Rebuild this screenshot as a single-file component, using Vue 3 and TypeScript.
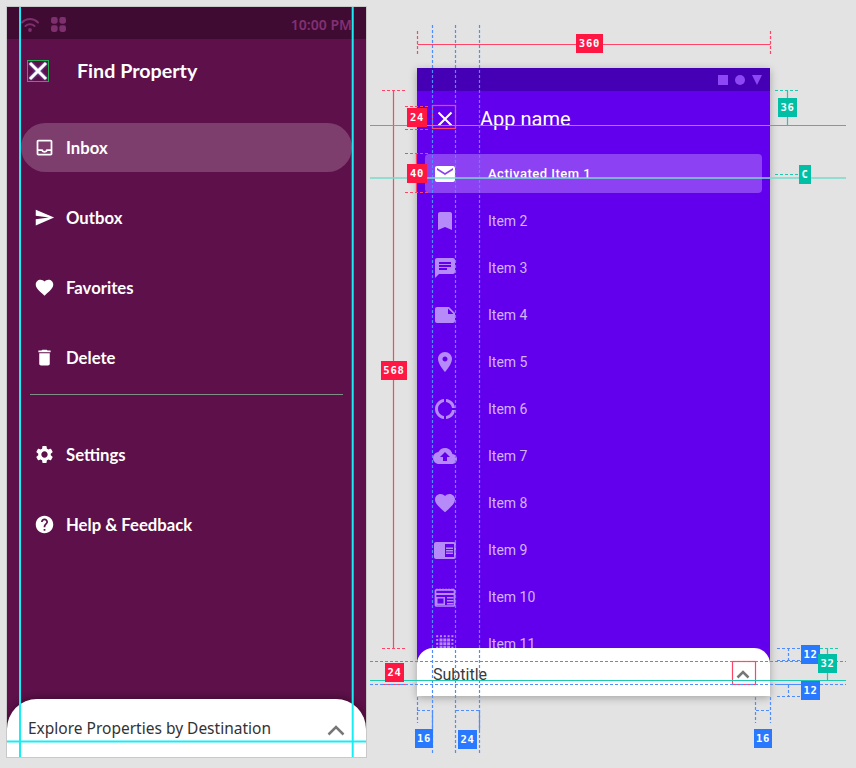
<template>
  <div class="board">
    <!-- left: themed drawer -->
    <section class="phone-left">
      <div class="status">
        <svg class="wifi" viewBox="0 0 18 15">
          <path d="M1 5.500C5.500.9 12.500.9 17 5.500M4.500 9C7 6.700 11 6.700 13.500 9" />
          <circle cx="9" cy="13" r="1.900" />
        </svg>
        <svg class="apps" viewBox="1 1 14 14">
          <rect x="1" y="1" width="6.200" height="6.200" rx="2" />
          <rect x="8.800" y="1" width="6.200" height="6.200" rx="2" />
          <rect x="1" y="8.800" width="6.200" height="6.200" rx="2" />
          <rect x="8.800" y="8.800" width="6.200" height="6.200" rx="2" />
        </svg>
        <span class="time">10:00 PM</span>
      </div>
      <header class="left-head">
        <span class="close-box">
          <svg viewBox="0 0 22 22"><path d="M3 3l16 16M19 3L3 19" /></svg>
        </span>
        <span class="left-title">Find Property</span>
      </header>
      <nav class="left-nav">
        <a
          v-for="item in mainLinks"
          :key="item.label"
          class="left-item"
          :class="{ active: item.active }"
        >
          <svg viewBox="0 0 24 24"><path :d="item.icon" /></svg>
          <span>{{ item.label }}</span>
        </a>
      </nav>
      <div class="left-divider"></div>
      <nav class="left-nav second">
        <a v-for="item in otherLinks" :key="item.label" class="left-item">
          <svg viewBox="0 0 24 24"><path :d="item.icon" /></svg>
          <span>{{ item.label }}</span>
        </a>
      </nav>
      <div class="left-sheet">
        <span>Explore Properties by Destination</span>
        <svg viewBox="0 0 18 11"><path d="M1.500 9.500L9 2l7.500 7.500" /></svg>
      </div>
    </section>

    <!-- right: spec drawer -->
    <section class="phone-right">
      <div class="r-status">
        <i class="st-square"></i>
        <i class="st-circle"></i>
        <i class="st-triangle"></i>
      </div>
      <header class="r-head">
        <svg viewBox="0 0 24 24"><path d="M5.500 5.500l13 13M18.500 5.500l-13 13" /></svg>
        <span>App name</span>
      </header>
      <div class="r-active">
        <svg viewBox="0 0 24 24"><path :d="icons.mail" /></svg>
        <span>Activated Item 1</span>
      </div>
      <ul class="r-list">
        <li v-for="(item, i) in specItems" :key="item.label" class="r-item">
          <svg viewBox="0 0 24 24">
            <path v-if="item.icon" :d="item.icon" fill-rule="evenodd" />
            <template v-else-if="i === 8">
              <rect class="stroke" x="2.500" y="4.800" width="19" height="16.200" rx="1" />
              <path d="M3 3.800h2v1.500H3zM6 3.800h2v1.500H6zM9 3.800h2v1.500H9zM12 3.800h2v1.500h-2zM15 3.800h2v1.500h-2zM18 3.800h3v1.500h-3zM3 8h18v2H3zM3 12h1.500v8H3zM4.500 12H12v1.500H4.500zM4.500 18.500H12V20H4.500zM10.500 12H12v8h-1.500zM14 12h6.500v1.500H14zM14 15h6.500v1.500H14zM14 18h6.500v1.500H14z" />
            </template>
            <template v-else>
              <rect
                v-for="d in dotGrid"
                :key="d"
                :x="(d % 5) * 3.800 + (isBigDot(d) ? 2.700 : 3.200)"
                :y="Math.floor(d / 5) * 3.800 + (isBigDot(d) ? 2.700 : 3.200)"
                :width="isBigDot(d) ? 3 : 2"
                :height="isBigDot(d) ? 3 : 2"
              />
            </template>
          </svg>
          <span>{{ item.label }}</span>
        </li>
      </ul>
      <div class="r-sheet">
        <span>Subtitle</span>
        <svg viewBox="0 0 24 24"><path d="M6.500 15.500L12 10l5.500 5.500" /></svg>
      </div>
    </section>

    <!-- redline overlay, coordinates are the drawing itself -->
    <svg class="marks" viewBox="0 0 856 768">
      <g stroke="#17eef3" stroke-width="2">
        <path d="M20 7v750M352.700 7v750M7 741.500h359" />
      </g>
      <g stroke="#ff4468" stroke-width="1.200">
        <path d="M417.500 44.500h353M393.500 90v558M416.500 153v39" />
        <path class="dash" d="M417.500 31v25M770.500 31v25M382 90.500h25M382 648.500h25M405 106.500h25M405 129.500h25M405 153.500h25M405 192.500h25M382 684.500h25" />
        <rect x="432.500" y="105.500" width="23" height="23" />
        <rect x="732.500" y="661.500" width="23" height="23" />
      </g>
      <g stroke="#4d8dff" stroke-width="1.200">
        <path class="dash" d="M432.500 25v728M455.500 25v728M479.500 25v728M370 661.500h476M370 684.500h476M417.500 697v26M755.500 697v26M770.500 697v26M417 710.500h15M456 710.500h23M756 710.500h14M777 648.500h24M777 660.500h24M777 684.500h24M777 696.500h24M788.500 648v12M788.500 685v11" />
        <path d="M432.500 710v20M479.500 710v20" />
      </g>
      <g stroke="#1fc9ae" stroke-width="1.200">
        <path d="M370 125.500h476M787.500 90v35M827.500 648v32" />
        <path stroke="#76dccb" stroke-width="1.500" d="M370 178h476" />
        <path class="dash" d="M775 90.500h25M775 174.500h25M815 648.500h25M815 680.500h25" />
        <path d="M370 680.500h476" />
      </g>
    </svg>
    <span v-for="b in badges" :key="b.id" class="badge" :class="b.kind" :style="badgeStyle(b)">{{ b.text }}</span>
  </div>
</template>

<script setup lang="ts">
interface Badge {
  id: number
  text: string
  kind: 'red' | 'teal' | 'blue'
  x: number
  y: number
  w: number
}

const icons = {
  mail: 'M20 4H4c-1.100 0-1.990.9-1.990 2L2 18c0 1.100.9 2 2 2h16c1.100 0 2-.9 2-2V6c0-1.100-.9-2-2-2zm0 4l-8 5-8-5V6l8 5 8-5v2z',
  heart: 'M12 21.350l-1.450-1.320C5.400 15.360 2 12.280 2 8.500 2 5.420 4.420 3 7.500 3c1.740 0 3.410.81 4.500 2.090C13.090 3.810 14.760 3 16.500 3 19.580 3 22 5.420 22 8.500c0 3.780-3.400 6.860-8.550 11.540L12 21.350z',
}

const mainLinks = [
  { label: 'Inbox', active: true, icon: 'M19 3H5c-1.100 0-2 .9-2 2v14c0 1.100.9 2 2 2h14c1.100 0 2-.9 2-2V5c0-1.100-.9-2-2-2zm0 16H5v-3h3.560c.69 1.190 1.970 2 3.450 2s2.750-.81 3.440-2H19v3zm0-5h-4.990c0 1.100-.9 2-2 2s-2-.9-2-2H5V5h14v9z' },
  { label: 'Outbox', icon: 'M2.010 21L23 12 2.010 3 2 10l15 2-15 2z' },
  { label: 'Favorites', icon: icons.heart },
  { label: 'Delete', icon: 'M6 19c0 1.100.9 2 2 2h8c1.100 0 2-.9 2-2V7H6v12zM19 4h-3.500l-1-1h-5l-1 1H5v2h14V4z' },
]

const otherLinks = [
  { label: 'Settings', icon: 'M19.140 12.940c.04-.3.06-.61.06-.94 0-.32-.02-.64-.07-.94l2.030-1.580a.49.49 0 0 0 .12-.61l-1.920-3.320a.488.488 0 0 0-.59-.22l-2.390.96c-.5-.38-1.030-.7-1.620-.94l-.36-2.540a.484.484 0 0 0-.48-.41h-3.840c-.24 0-.43.17-.47.41l-.36 2.540c-.59.24-1.130.57-1.620.94l-2.390-.96c-.22-.08-.47 0-.59.22L2.740 8.870c-.12.21-.08.47.12.61l2.030 1.580c-.05.3-.09.63-.09.94s.02.64.07.94l-2.030 1.580a.49.49 0 0 0-.12.61l1.920 3.320c.12.22.37.29.59.22l2.390-.96c.5.38 1.030.7 1.620.94l.36 2.540c.05.24.24.41.48.41h3.840c.24 0 .44-.17.47-.41l.36-2.540c.59-.24 1.130-.56 1.620-.94l2.390.96c.22.08.47 0 .59-.22l1.920-3.320c.12-.22.07-.47-.12-.61l-2.010-1.580zM12 15.600c-1.980 0-3.600-1.620-3.600-3.600s1.620-3.600 3.600-3.600 3.600 1.620 3.600 3.600-1.620 3.600-3.600 3.600z' },
  { label: 'Help & Feedback', icon: 'M12 2C6.480 2 2 6.480 2 12s4.480 10 10 10 10-4.480 10-10S17.520 2 12 2zm1 17h-2v-2h2v2zm2.070-7.750l-.9.92C13.450 12.900 13 13.500 13 15h-2v-.5c0-1.100.45-2.100 1.170-2.830l1.240-1.260c.37-.36.59-.86.59-1.410 0-1.100-.9-2-2-2s-2 .9-2 2H8c0-2.210 1.790-4 4-4s4 1.790 4 4c0 .88-.36 1.680-.93 2.250z' },
]

const specItems: { label: string; icon?: string }[] = [
  { label: 'Item 2', icon: 'M17 3H7c-1.100 0-2 .9-2 2v16l7-3 7 3V5c0-1.100-.9-2-2-2z' },
  { label: 'Item 3', icon: 'M20 2H4c-1.100 0-2 .9-2 2v18l4-4h14c1.100 0 2-.9 2-2V4c0-1.100-.9-2-2-2zM6 9h12v2H6V9zm8 5H6v-2h8v2zm4-6H6V6h12v2z' },
  { label: 'Item 4', icon: 'M22 10l-6-6H4c-1.100 0-2 .9-2 2v12.010c0 1.100.9 1.990 2 1.990l16-.01c1.100 0 2-.89 2-1.990v-8zm-7-4.500l5.500 5.500H15V5.500z' },
  { label: 'Item 5', icon: 'M12 2C8.130 2 5 5.130 5 9c0 5.250 7 13 7 13s7-7.750 7-13c0-3.870-3.130-7-7-7zm0 9.500c-1.380 0-2.500-1.120-2.500-2.500s1.120-2.500 2.500-2.500 2.500 1.120 2.500 2.500-1.120 2.500-2.500 2.500z' },
  { label: 'Item 6', icon: 'M11 5.080V2c-5 .5-9 4.810-9 10s4 9.500 9 10v-3.080c-3-.48-6-3.190-6-6.920s3-6.440 6-6.920zM18.970 11H22c-.47-5-4-8.530-9-9v3.080C16 5.510 18.540 8 18.970 11zM13 18.920V22c5-.47 8.530-4 9-9h-3.030c-.43 3-2.970 5.490-5.970 5.920z' },
  { label: 'Item 7', icon: 'M19.350 10.040C18.670 6.590 15.640 4 12 4 9.110 4 6.600 5.640 5.350 8.040 2.340 8.360 0 10.910 0 14c0 3.310 2.690 6 6 6h13c2.760 0 5-2.240 5-5 0-2.640-2.050-4.780-4.650-4.960zM14 13v4h-4v-4H7l5-5 5 5h-3z' },
  { label: 'Item 8', icon: icons.heart },
  { label: 'Item 9', icon: 'M13 12h7v1.500h-7zm0-2.500h7V11h-7zm0 5h7V16h-7zM21 4H3c-1.100 0-2 .9-2 2v13c0 1.100.9 2 2 2h18c1.100 0 2-.9 2-2V6c0-1.100-.9-2-2-2zm0 15h-9V6h9v13z' },
  { label: 'Item 10' },
  { label: 'Item 11' },
]

const dotGrid = Array.from({ length: 25 }, (_, i) => i)

const isBigDot = (d: number) => d > 5 && d % 5 > 0 && d % 5 < 4 && d < 20

const badges: Badge[] = [
  { id: 1, text: '360', kind: 'red', x: 576, y: 34, w: 27 },
  { id: 2, text: '24', kind: 'red', x: 407, y: 108, w: 20 },
  { id: 3, text: '40', kind: 'red', x: 407, y: 164, w: 20 },
  { id: 4, text: '568', kind: 'red', x: 381, y: 361, w: 26 },
  { id: 5, text: '24', kind: 'red', x: 385, y: 663, w: 19 },
  { id: 6, text: '36', kind: 'teal', x: 778, y: 98, w: 19 },
  { id: 7, text: 'C', kind: 'teal', x: 799, y: 165, w: 12 },
  { id: 8, text: '12', kind: 'blue', x: 801, y: 645, w: 19 },
  { id: 9, text: '32', kind: 'teal', x: 818, y: 654, w: 19 },
  { id: 10, text: '12', kind: 'blue', x: 801, y: 681, w: 19 },
  { id: 11, text: '16', kind: 'blue', x: 415, y: 729, w: 18 },
  { id: 12, text: '24', kind: 'blue', x: 458, y: 730, w: 19 },
  { id: 13, text: '16', kind: 'blue', x: 754, y: 729, w: 18 },
]

const badgeStyle = (b: Badge) => ({
  left: `${b.x}px`,
  top: `${b.y}px`,
  width: `${b.w}px`,
})
</script>

<style>
html,
body {
  margin: 0;
  background: #e3e3e3;
}
</style>

<style scoped>
.board {
  position: relative;
  display: flex;
  align-items: flex-start;
  width: 856px;
  height: 768px;
  padding: 6px 0 0 6px;
  box-sizing: border-box;
  background: #e3e3e3;
  overflow: hidden;
}

/* left phone */
.phone-left {
  position: relative;
  display: flex;
  flex-direction: column;
  flex: none;
  width: 359px;
  height: 750px;
  border: 1px solid #c9c9c9;
  background: #5d1049;
  overflow: hidden;
  font-family: 'Lato', 'Noto Sans', sans-serif;
  color: #fff;
}

.status {
  display: flex;
  align-items: center;
  height: 32px;
  flex: none;
  box-sizing: border-box;
  padding: 2px 14px 0 14px;
  background: #3f0b32;
}

.wifi {
  width: 18px;
  height: 15px;
  fill: #7e2f6e;
}

.wifi path {
  fill: none;
  stroke: #7e2f6e;
  stroke-width: 2;
  stroke-linecap: round;
}

.apps {
  width: 15px;
  height: 15px;
  margin-left: 12px;
  fill: #7e2f6e;
}

.time {
  margin-left: auto;
  font-family: 'Noto Sans', sans-serif;
  font-size: 14px;
  font-weight: 600;
  color: #842f73;
}

.left-head {
  display: flex;
  align-items: center;
  height: 60px;
  box-sizing: border-box;
  padding: 2px 0 0 20px;
  flex: none;
}

.close-box {
  width: 22px;
  height: 22px;
  box-sizing: border-box;
  margin-top: 2px;
  border: 1.500px solid #22b14c;
}

.close-box svg {
  display: block;
  width: 22px;
  height: 22px;
  margin: -1.500px;
}

.close-box path {
  fill: none;
  stroke: #fff;
  stroke-width: 3;
  filter: drop-shadow(0 0 1px #7f8ff0);
}

.left-title {
  margin-left: 28px;
  font-size: 19.700px;
  font-weight: 700;
}

.left-nav {
  display: flex;
  flex-direction: column;
  gap: 21px;
  padding: 24px 14px 0;
}

.left-nav.second {
  padding-top: 35px;
}

.left-item {
  display: flex;
  align-items: center;
  height: 49px;
  padding-left: 13px;
  border-radius: 25px;
  font-size: 16.700px;
  font-weight: 700;
}

.left-item span {
  margin-top: 1px;
}

.left-item.active {
  background: #7d3d6d;
}

.left-item svg {
  width: 21px;
  height: 21px;
  fill: #fff;
  flex: none;
  margin-right: 11px;
}

.left-divider {
  height: 1px;
  margin: 12px 23px 0;
  background: #7e8f85;
  flex: none;
}

.left-sheet {
  position: absolute;
  left: 0;
  right: 0;
  bottom: 0;
  display: flex;
  align-items: flex-start;
  justify-content: space-between;
  height: 58px;
  padding: 19px 21px 0;
  box-sizing: border-box;
  border-radius: 30px 30px 0 0;
  background: #fff;
  box-shadow: 0 -2px 6px rgba(0, 0, 0, 0.3);
  color: #333;
  font-family: 'Noto Sans', sans-serif;
  font-size: 15.500px;
  line-height: 21px;
}

.left-sheet svg {
  width: 18px;
  height: 11px;
  margin-top: 7px;
  fill: none;
  stroke: #777;
  stroke-width: 2.500;
}

/* right phone */
.phone-right {
  position: relative;
  flex: none;
  width: 353px;
  height: 628px;
  margin: 62px 0 0 50px;
  background: #6200ee;
  overflow: hidden;
  box-shadow: 0 2px 8px rgba(0, 0, 0, 0.28);
  font-family: 'Roboto', sans-serif;
  color: #fff;
}

.r-status {
  display: flex;
  align-items: center;
  justify-content: flex-end;
  gap: 7px;
  height: 23px;
  padding-right: 8px;
  background: #4500b5;
}

.st-square {
  width: 10px;
  height: 10px;
  background: #8d47f5;
}

.st-circle {
  width: 10px;
  height: 10px;
  border-radius: 50%;
  background: #8d47f5;
}

.st-triangle {
  width: 0;
  height: 0;
  border-left: 5.500px solid transparent;
  border-right: 5.500px solid transparent;
  border-top: 10px solid #8d47f5;
}

.r-head {
  display: flex;
  align-items: center;
  height: 57px;
  padding: 0 0 2px 16px;
  box-sizing: border-box;
  font-size: 20px;
  font-weight: 400;
}

.r-head svg {
  width: 24px;
  height: 24px;
  fill: none;
  stroke: #fff;
  stroke-width: 2;
  margin-right: 23px;
}

.r-active {
  display: flex;
  align-items: center;
  height: 39px;
  margin: 6px 8px 0;
  padding-left: 8px;
  border-radius: 4px;
  background: #8c41f3;
  font-size: 13px;
  font-weight: 500;
  letter-spacing: 0.5px;
}

.r-active svg {
  width: 24px;
  height: 24px;
  fill: #fff;
  margin-right: 31px;
}

.r-list {
  list-style: none;
  margin: 4px 0 0;
  padding: 0;
}

.r-item {
  display: flex;
  align-items: center;
  height: 47px;
  padding-left: 16px;
  font-size: 14px;
  color: #d3b4fb;
}

.r-item svg {
  width: 24px;
  height: 24px;
  fill: #b68af8;
  margin-right: 31px;
  flex: none;
}

.r-item .stroke {
  stroke: #b68af8;
  stroke-width: 1.700;
  fill: none;
}

.r-sheet {
  position: absolute;
  left: 0;
  right: 0;
  bottom: 0;
  display: flex;
  align-items: center;
  justify-content: space-between;
  height: 48px;
  padding: 4px 15px 0 16px;
  box-sizing: border-box;
  border-radius: 16px 16px 0 0;
  background: #fff;
  color: #3a3a3a;
  font-size: 16px;
}

.r-sheet svg {
  width: 24px;
  height: 24px;
  fill: none;
  stroke: #777;
  stroke-width: 2.500;
}

/* redlines */
.marks {
  position: absolute;
  inset: 0;
  width: 856px;
  height: 768px;
  fill: none;
  pointer-events: none;
}

.marks .dash {
  stroke-dasharray: 3 2;
}

.badge {
  position: absolute;
  height: 19px;
  line-height: 19px;
  text-align: center;
  font-family: 'DejaVu Sans Mono', 'Liberation Mono', monospace;
  font-size: 10.500px;
  font-weight: 700;
  letter-spacing: 0.8px;
  color: #fff;
}

.badge.red {
  background: #ff1744;
}

.badge.teal {
  background: #00bfa5;
}

.badge.blue {
  background: #2979ff;
}
</style>
